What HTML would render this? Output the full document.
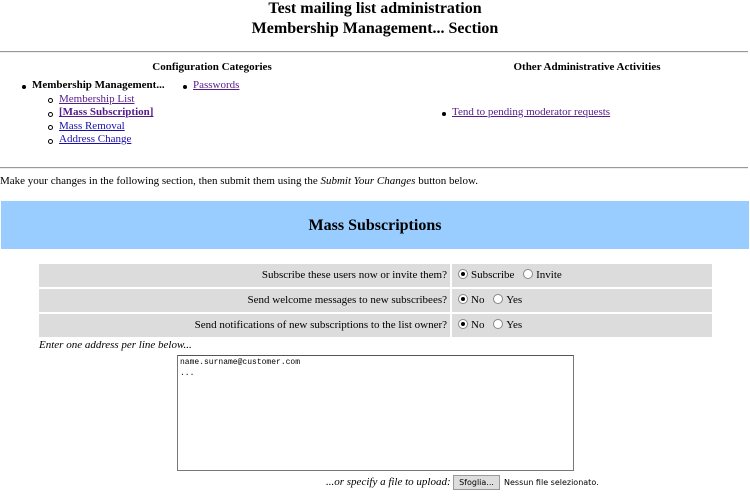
<!DOCTYPE html>
<html><head><style>
body{margin:0;width:750px;height:498px;background:#fff;font-family:"Liberation Serif",serif;font-size:11px;color:#000;position:relative;overflow:hidden}
.a{position:absolute;white-space:nowrap}
h1{position:absolute;left:0;width:750px;text-align:center;font-size:16px;margin:0;line-height:20px}
hr{position:absolute;left:0;width:748px;margin:0;border:0;border-top:1px solid #999;border-bottom:1px solid #eee;height:0}
a{color:#1a0dab;text-decoration:underline}
.v{color:#551a8b}
.dot{position:absolute;width:4px;height:4px;border-radius:50%;background:#000}
.cir{position:absolute;border-radius:50%;border:1px solid #000;box-sizing:border-box;width:5px;height:5px}
.row{position:absolute;left:39px;width:673px;height:23px}
.l{position:absolute;left:0;width:411px;height:23px;background:#dcdcdc;text-align:right;line-height:23px}
.l span{margin-right:3px}
.r{position:absolute;left:413px;width:260px;height:23px;background:#dcdcdc;line-height:23px}
.rad{display:inline-block;width:8px;height:8px;border:1px solid #888;border-radius:50%;vertical-align:-1px;margin:0 3px 0 6px;position:relative;background:#fff}
.on:after{content:"";position:absolute;left:2px;top:2px;width:4px;height:4px;border-radius:50%;background:#000}
</style></head><body>
<h1 style="top:-1px">Test mailing list administration</h1>
<h1 style="top:19px">Membership Management... Section</h1>
<hr style="top:51px">
<div class="a" style="left:0;width:424px;text-align:center;top:61px;font-weight:bold">Configuration Categories</div>
<div class="a" style="left:424px;width:326px;text-align:center;top:61px;font-weight:bold">Other Administrative Activities</div>
<div class="dot" style="left:22px;top:85px"></div>
<div class="a" style="left:32px;top:79px;font-weight:bold">Membership Management...</div>
<div class="dot" style="left:183px;top:85px"></div>
<a class="a v" style="left:193px;top:79px">Passwords</a>
<div class="cir" style="left:48px;top:98px"></div><a class="a v" style="left:59px;top:93px">Membership List</a>
<div class="cir" style="left:48px;top:112px"></div><a class="a v" style="left:59px;top:106px;font-weight:bold">[Mass Subscription]</a>
<div class="cir" style="left:48px;top:125px"></div><a class="a" style="left:59px;top:120px">Mass Removal</a>
<div class="cir" style="left:48px;top:139px"></div><a class="a" style="left:59px;top:133px">Address Change</a>
<div class="dot" style="left:442px;top:112px"></div>
<a class="a v" style="left:452px;top:106px">Tend to pending moderator requests</a>
<hr style="top:167px">
<div class="a" style="left:0;top:175px">Make your changes in the following section, then submit them using the <i>Submit Your Changes</i> button below.</div>
<div class="a" style="left:1px;top:201px;width:748px;height:48px;background:#99ccff;text-align:center;line-height:49px;font-size:16px;font-weight:bold">Mass Subscriptions</div>
<div class="row" style="top:264px"><div class="l"><span>Subscribe these users now or invite them?</span></div><div class="r"><span class="rad on"></span>Subscribe <span class="rad"></span>Invite</div></div>
<div class="row" style="top:289px"><div class="l"><span>Send welcome messages to new subscribees?</span></div><div class="r"><span class="rad on"></span>No <span class="rad"></span>Yes</div></div>
<div class="row" style="top:314px"><div class="l"><span>Send notifications of new subscriptions to the list owner?</span></div><div class="r"><span class="rad on"></span>No <span class="rad"></span>Yes</div></div>
<div class="a" style="left:39px;top:339px;font-style:italic">Enter one address per line below...</div>
<div class="a" style="left:177px;top:355px;border:1px solid #777;border-top-color:#555;font-family:'Liberation Mono',monospace;font-size:8px;line-height:11px;padding:1px 2px;box-sizing:border-box;width:397px;height:116px">name.surname@customer.com<br>...</div>
<div class="a" style="left:326px;top:476px;font-style:italic">...or specify a file to upload:</div>
<div class="a" style="left:453px;top:475px;width:47px;height:15px;background:#ddd;border:1px solid #999;box-sizing:border-box;font-family:'DejaVu Sans',sans-serif;font-size:8px;text-align:center;line-height:13px">Sfoglia...</div>
<div class="a" style="left:504px;top:478px;font-family:'DejaVu Sans',sans-serif;font-size:8px">Nessun file selezionato.</div>
</body></html>
